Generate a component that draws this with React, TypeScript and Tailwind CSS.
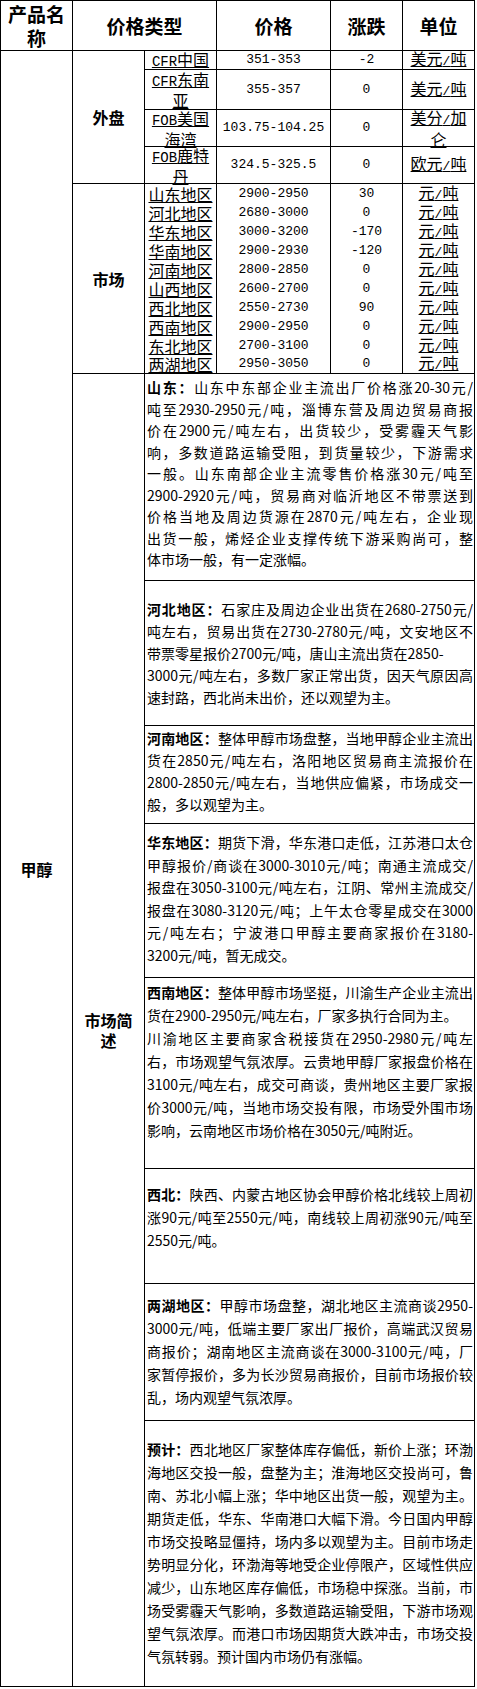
import React from "react";

const M = ({ children }: { children: React.ReactNode }) => (
  <span className="font-['Liberation_Mono',monospace] text-[13px]">{children}</span>
);
const L = ({ children }: { children: React.ReactNode }) => (
  <span className="font-['Liberation_Mono',monospace] text-[14px]">{children}</span>
);

type Row = { label: React.ReactNode; price: string; chg: string; unit: React.ReactNode; h: string };

const waipan: Row[] = [
  { label: <><L>CFR</L>中国</>, price: "351-353", chg: "-2", unit: <>美元<M>/</M>吨</>, h: "h-[19px]" },
  { label: <><L>CFR</L>东南<br />亚</>, price: "355-357", chg: "0", unit: <>美元<M>/</M>吨</>, h: "h-[40px]" },
  { label: <><L>FOB</L>美国<br />海湾</>, price: "103.75-104.25", chg: "0", unit: <>美分<M>/</M>加<br />仑</>, h: "h-[37px]" },
  { label: <><L>FOB</L>鹿特<br />丹</>, price: "324.5-325.5", chg: "0", unit: <>欧元<M>/</M>吨</>, h: "h-[37px]" },
];

const market: [string, string, string][] = [
  ["山东地区", "2900-2950", "30"],
  ["河北地区", "2680-3000", "0"],
  ["华东地区", "3000-3200", "-170"],
  ["华南地区", "2900-2930", "-120"],
  ["河南地区", "2800-2850", "0"],
  ["山西地区", "2600-2700", "0"],
  ["西北地区", "2550-2730", "90"],
  ["西南地区", "2900-2950", "0"],
  ["东北地区", "2700-3100", "0"],
  ["两湖地区", "2950-3050", "0"],
];

type Desc = { label: string; lines: string[]; box: string; lh: string; plain: number[] };

const descs: Desc[] = [
  {
    label: "山东：",
    box: "h-[207px] pt-[3px]",
    lh: "leading-[21.5px]",
    plain: [],
    lines: [
      "山东中东部企业主流出厂价格涨20-30元/",
      "吨至2930-2950元/吨，淄博东营及周边贸易商报",
      "价在2900元/吨左右，出货较少，受雾霾天气影",
      "响，多数道路运输受阻，到货量较少，下游需求",
      "一般。山东南部企业主流零售价格涨30元/吨至",
      "2900-2920元/吨，贸易商对临沂地区不带票送到",
      "价格当地及周边货源在2870元/吨左右，企业现",
      "出货一般，烯烃企业支撑传统下游采购尚可，整",
      "体市场一般，有一定涨幅。",
    ],
  },
  {
    label: "河北地区：",
    box: "h-[145px] pt-[17px]",
    lh: "leading-[22px]",
    plain: [2],
    lines: [
      "石家庄及周边企业出货在2680-2750元/",
      "吨左右，贸易出货在2730-2780元/吨，文安地区不",
      "带票零星报价2700元/吨，唐山主流出货在2850-",
      "3000元/吨左右，多数厂家正常出货，因天气原因高",
      "速封路，西北尚未出价，还以观望为主。",
    ],
  },
  {
    label: "河南地区：",
    box: "h-[98px] pt-[1px]",
    lh: "leading-[22px]",
    plain: [],
    lines: [
      "整体甲醇市场盘整，当地甲醇企业主流出",
      "货在2850元/吨左右，洛阳地区贸易商主流报价在",
      "2800-2850元/吨左右，当地供应偏紧，市场成交一",
      "般，多以观望为主。",
    ],
  },
  {
    label: "华东地区：",
    box: "h-[154px] pt-[7px]",
    lh: "leading-[22.5px]",
    plain: [],
    lines: [
      "期货下滑，华东港口走低，江苏港口太仓",
      "甲醇报价/商谈在3000-3010元/吨；南通主流成交/",
      "报盘在3050-3100元/吨左右，江阴、常州主流成交/",
      "报盘在3080-3120元/吨；上午太仓零星成交在3000",
      "元/吨左右；宁波港口甲醇主要商家报价在3180-",
      "3200元/吨，暂无成交。",
    ],
  },
  {
    label: "西南地区：",
    box: "h-[191px] pt-[3px]",
    lh: "leading-[23px]",
    plain: [1],
    lines: [
      "整体甲醇市场坚挺，川渝生产企业主流出",
      "货在2900-2950元/吨左右，厂家多执行合同为主。",
      "川渝地区主要商家含税接货在2950-2980元/吨左",
      "右，市场观望气氛浓厚。云贵地甲醇厂家报盘价格在",
      "3100元/吨左右，成交可商谈，贵州地区主要厂家报",
      "价3000元/吨，当地市场交投有限，市场受外围市场",
      "影响，云南地区市场价格在3050元/吨附近。",
    ],
  },
  {
    label: "西北：",
    box: "h-[115px] pt-[14px]",
    lh: "leading-[23px]",
    plain: [],
    lines: [
      "陕西、内蒙古地区协会甲醇价格北线较上周初",
      "涨90元/吨至2550元/吨，南线较上周初涨90元/吨至",
      "2550元/吨。",
    ],
  },
  {
    label: "两湖地区：",
    box: "h-[137px] pt-[10px]",
    lh: "leading-[23px]",
    plain: [],
    lines: [
      "甲醇市场盘整，湖北地区主流商谈2950-",
      "3000元/吨，低端主要厂家出厂报价，高端武汉贸易",
      "商报价；湖南地区主流商谈在3000-3100元/吨，厂",
      "家暂停报价，多为长沙贸易商报价，目前市场报价较",
      "乱，场内观望气氛浓厚。",
    ],
  },
  {
    label: "预计：",
    box: "h-[266px] pt-[17px]",
    lh: "leading-[23px]",
    plain: [],
    lines: [
      "西北地区厂家整体库存偏低，新价上涨；环渤",
      "海地区交投一般，盘整为主；淮海地区交投尚可，鲁",
      "南、苏北小幅上涨；华中地区出货一般，观望为主。",
      "期货走低，华东、华南港口大幅下滑。今日国内甲醇",
      "市场交投略显僵持，场内多以观望为主。目前市场走",
      "势明显分化，环渤海等地受企业停限产，区域性供应",
      "减少，山东地区库存偏低，市场稳中探涨。当前，市",
      "场受雾霾天气影响，多数道路运输受阻，下游市场观",
      "望气氛浓厚。而港口市场因期货大跌冲击，市场交投",
      "气氛转弱。预计国内市场仍有涨幅。",
    ],
  },
];

const cell = "flex items-center justify-center text-center border-r border-b border-black";

export default function App() {
  return (
    <div className="bg-white min-h-[1689px] font-['Noto_Sans_CJK_SC',sans-serif] text-black">
      <div className="w-[475px] border-l border-t border-black">
        {/* header */}
        <div className="flex h-[50px] text-[19px] font-bold leading-[24px]">
          <div className={`${cell} w-[72px]`}>产品名<br />称</div>
          <div className={`${cell} w-[144px]`}>价格类型</div>
          <div className={`${cell} w-[114px]`}>价格</div>
          <div className={`${cell} w-[72px]`}>涨跌</div>
          <div className={`${cell} w-[72px]`}>单位</div>
        </div>
        {/* body */}
        <div className="flex">
          <div className={`${cell} w-[72px] h-[1636px] text-[16px] font-bold`}>甲醇</div>
          <div className="flex flex-col w-[402px]">
            {/* 外盘 */}
            <div className="flex">
              <div className={`${cell} w-[72px] text-[16px] font-bold`}>外盘</div>
              <div className="flex flex-col w-[330px] text-[16px] leading-[18px]">
                {waipan.map((r, i) => (
                  <div key={i} className={`flex ${r.h} border-b border-black`}>
                    <div className="flex items-center justify-center text-center w-[72px] border-r border-black whitespace-nowrap underline underline-offset-[1px]">
                      <span>{r.label}</span>
                    </div>
                    <div className="flex items-center justify-center w-[114px] border-r border-black"><M>{r.price}</M></div>
                    <div className="flex items-center justify-center w-[72px] border-r border-black"><M>{r.chg}</M></div>
                    <div className="flex items-center justify-center text-center w-[72px] border-r border-black whitespace-nowrap underline underline-offset-[1px]">
                      <span>{r.unit}</span>
                    </div>
                  </div>
                ))}
              </div>
            </div>
            {/* 市场 */}
            <div className="flex">
              <div className={`${cell} w-[72px] text-[16px] font-bold`}>市场</div>
              <div className="flex flex-col w-[330px] text-[16px] leading-[18px]">
                {market.map((r, i) => (
                  <div key={i} className={`flex h-[19px] ${i === market.length - 1 ? "border-b border-black" : ""}`}>
                    <div className="flex items-center justify-center w-[72px] border-r border-black whitespace-nowrap">
                      <span className="underline underline-offset-[1px]">{r[0]}</span>
                    </div>
                    <div className="flex items-center justify-center w-[114px] border-r border-black"><M>{r[1]}</M></div>
                    <div className="flex items-center justify-center w-[72px] border-r border-black"><M>{r[2]}</M></div>
                    <div className="flex items-center justify-center w-[72px] border-r border-black whitespace-nowrap">
                      <span className="underline underline-offset-[1px]">元<M>/</M>吨</span>
                    </div>
                  </div>
                ))}
              </div>
            </div>
            {/* 市场简述 */}
            <div className="flex">
              <div className={`${cell} w-[72px] text-[16px] font-bold leading-[20px]`}>市场简<br />述</div>
              <div className="flex flex-col w-[330px] text-[14px]">
                {descs.map((d, i) => (
                  <div key={i} className={`${d.box} ${d.lh} pl-[2px] pr-[1px] border-r border-b border-black`}>
                    {d.lines.map((ln, j) => {
                      const justify = j < d.lines.length - 1 && !d.plain.includes(j);
                      return (
                        <div
                          key={j}
                          className={justify ? "whitespace-nowrap text-justify [text-align-last:justify]" : "whitespace-nowrap"}
                        >
                          {j === 0 ? <span className="font-bold">{d.label}</span> : null}
                          {ln}
                        </div>
                      );
                    })}
                  </div>
                ))}
              </div>
            </div>
          </div>
        </div>
      </div>
    </div>
  );
}
